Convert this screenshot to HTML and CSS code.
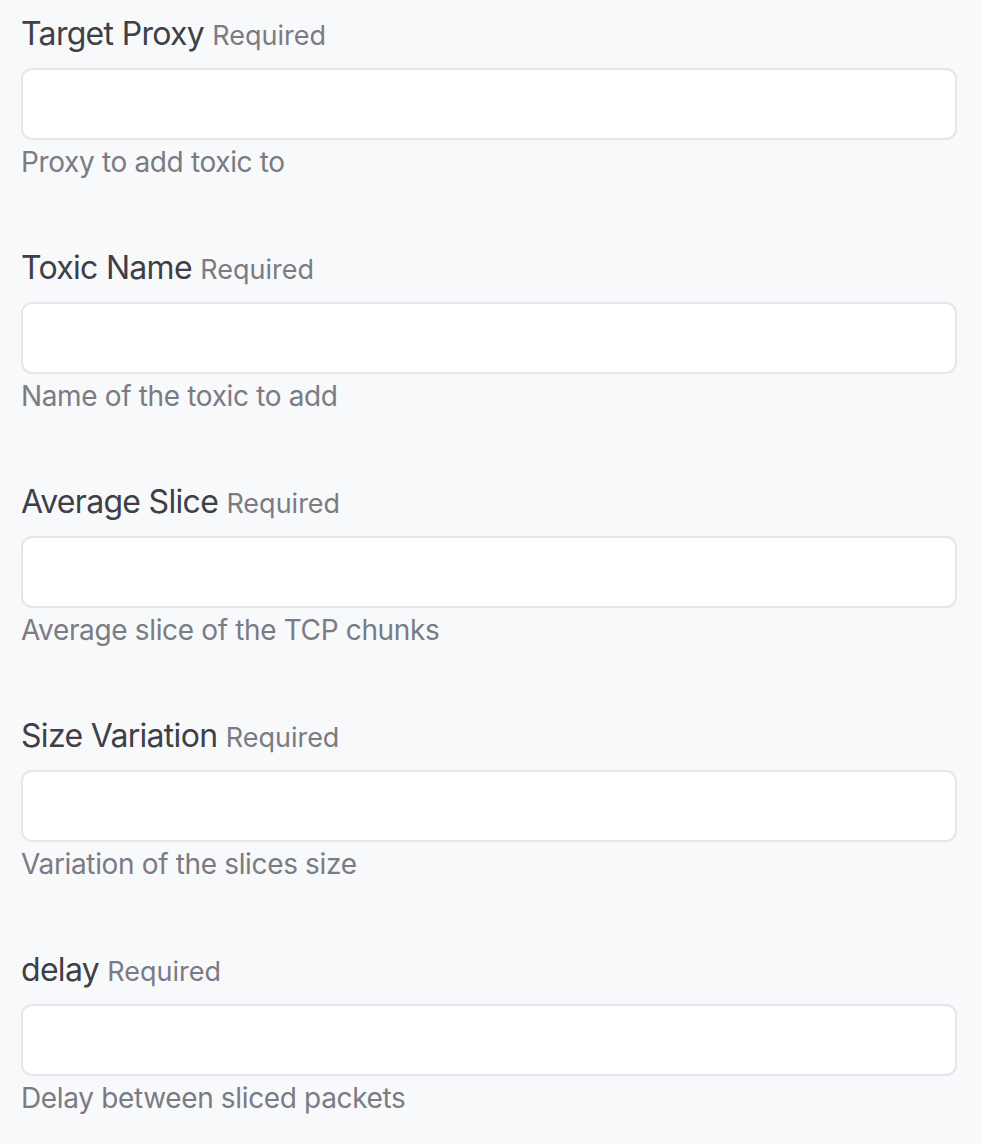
FILE: index.html
```html
<!DOCTYPE html>
<html>
<head>
<meta charset="utf-8">
<link rel="stylesheet" href="styles.css">
</head>
<body>
<form class="form">
  <div class="field">
    <label class="label">Target Proxy <span class="req">Required</span></label>
    <input class="input" type="text">
    <div class="help">Proxy to add toxic to</div>
  </div>
  <div class="field">
    <label class="label">Toxic Name <span class="req">Required</span></label>
    <input class="input" type="text">
    <div class="help">Name of the toxic to add</div>
  </div>
  <div class="field">
    <label class="label">Average Slice <span class="req">Required</span></label>
    <input class="input" type="text">
    <div class="help">Average slice of the TCP chunks</div>
  </div>
  <div class="field">
    <label class="label">Size Variation <span class="req">Required</span></label>
    <input class="input" type="text">
    <div class="help">Variation of the slices size</div>
  </div>
  <div class="field">
    <label class="label">delay <span class="req">Required</span></label>
    <input class="input" type="text">
    <div class="help">Delay between sliced packets</div>
  </div>
</form>
</body>
</html>
```
FILE: styles.css
```css
html, body {
  margin: 0;
  padding: 0;
  background: #f8f9fb;
}
body {
  font-family: Inter, "Noto Sans", sans-serif;
  padding: 10px 25px 0 21px;
}
.form {
  display: flex;
  flex-direction: column;
}
.field {
  display: flex;
  flex-direction: column;
  margin-bottom: 61px;
}
.label {
  display: block;
  font-size: 32px;
  line-height: 48px;
  height: 48px;
  color: #3f3f46;
  letter-spacing: -0.7px;
  margin-bottom: 10px;
}
.req {
  font-size: 27px;
  line-height: 1;
  letter-spacing: 0;
  color: #7b7b83;
}
.input {
  box-sizing: border-box;
  height: 72px;
  width: 100%;
  margin: 0;
  background: #ffffff;
  border: 2px solid #e5e6eb;
  border-radius: 11px;
  outline: none;
}
.help {
  margin-top: 1px;
  font-size: 28px;
  line-height: 42px;
  letter-spacing: -0.35px;
  color: #7b7b83;
}
```
